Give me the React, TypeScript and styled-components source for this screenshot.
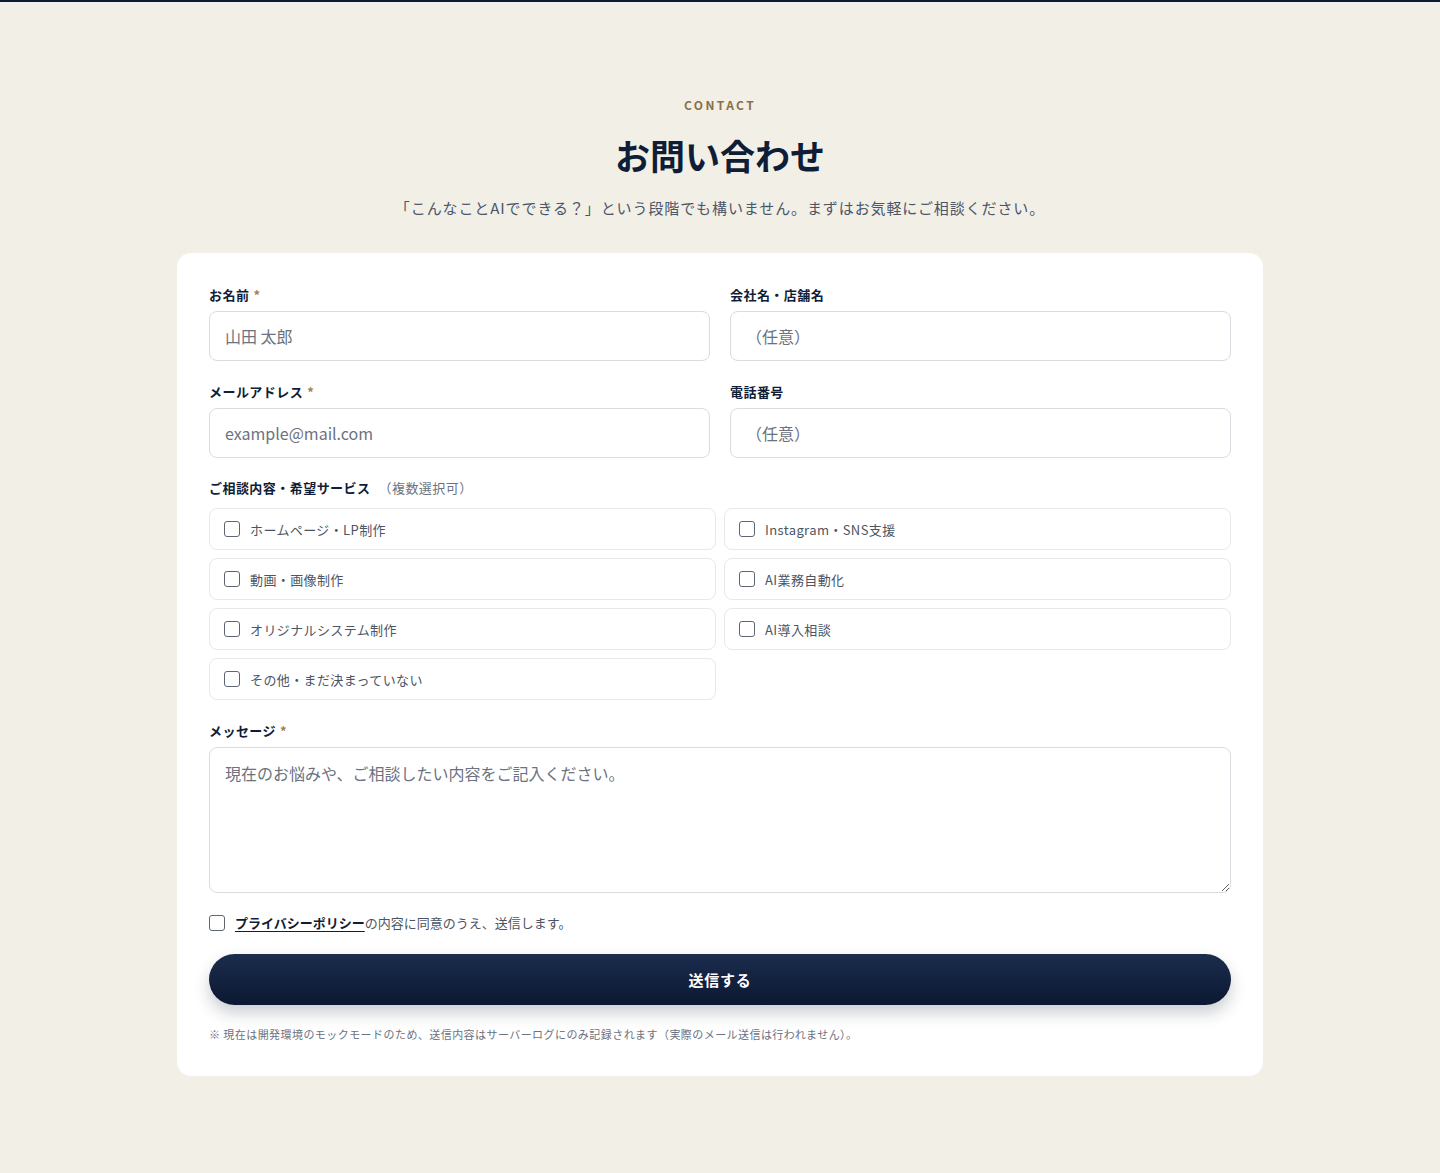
import React, { useState } from 'react';
import styled, { createGlobalStyle } from 'styled-components';

const GlobalStyle = createGlobalStyle`
  * { box-sizing: border-box; }
  body {
    margin: 0;
    background: #f2efe7;
    font-family: "Noto Sans CJK JP", "Noto Sans", sans-serif;
    color: #0f1d36;
    border-top: 2px solid #0c1a35;
  }
`;

const Page = styled.main`
  padding: 94px 0 97px;
  display: flex;
  flex-direction: column;
  align-items: center;
`;

const Eyebrow = styled.div`
  font-size: 12px;
  line-height: 18px;
  font-weight: 700;
  letter-spacing: 0.2em;
  color: #8a7048;
`;

const Title = styled.h1`
  margin: 16px 0 0;
  font-size: 35px;
  line-height: 50px;
  font-weight: 700;
  color: #0f1d36;
`;

const Lead = styled.p`
  margin: 16px 0 0;
  font-size: 15px;
  line-height: 24px;
  letter-spacing: 0.06em;
  color: #4a5568;
`;

const Card = styled.form`
  margin-top: 33px;
  width: 1086px;
  background: #fff;
  border-radius: 14px;
  padding: 32px 32px 34px;
  display: flex;
  flex-direction: column;
`;

const Grid = styled.div<{ $gap: number }>`
  display: grid;
  grid-template-columns: 1fr 1fr;
  column-gap: ${(p) => p.$gap}px;
  row-gap: ${(p) => (p.$gap === 20 ? 21 : 8)}px;
`;

const Field = styled.div<{ $top?: number }>`
  display: flex;
  flex-direction: column;
  gap: 6px;
  margin-top: ${(p) => p.$top ?? 0}px;
`;

const Label = styled.label`
  font-size: 13px;
  line-height: 20px;
  font-weight: 700;
  letter-spacing: 0.035em;
  color: #0f1d36;
`;

const Star = styled.span`
  color: #a0804a;
  margin-left: 4px;
`;

const Note = styled.span`
  font-weight: 400;
  color: #6b7280;
  margin-left: 8px;
`;

const Input = styled.input`
  height: 50px;
  border: 1px solid #d9dce1;
  border-radius: 8px;
  padding: 0 15px;
  font: inherit;
  font-size: 16px;
  color: #0f1d36;
  outline: none;
  &::placeholder { color: #6b7280; }
`;

const TextArea = styled.textarea`
  height: 146px;
  border: 1px solid #d9dce1;
  border-radius: 8px;
  padding: 13px 15px;
  font: inherit;
  font-size: 16px;
  line-height: 24px;
  color: #0f1d36;
  outline: none;
  resize: vertical;
  &::placeholder { color: #6b7280; }
`;

const Check = styled.input.attrs({ type: 'checkbox' })`
  appearance: none;
  margin: 0;
  width: 16px;
  height: 16px;
  flex: none;
  border: 1.5px solid #5f6673;
  border-radius: 3px;
  background: #fff;
  &:checked { background: #0f1d36; border-color: #0f1d36; }
`;

const Option = styled.label`
  height: 42px;
  display: flex;
  align-items: center;
  gap: 10px;
  padding: 0 14px;
  border: 1px solid #e6e8ec;
  border-radius: 8px;
  font-size: 13px;
  letter-spacing: 0.03em;
  color: #4b5563;
  cursor: pointer;
`;

const OptionGrid = styled(Grid)`
  margin-top: 4px;
`;

const Agree = styled.label`
  margin-top: 20px;
  display: flex;
  align-items: center;
  gap: 10px;
  font-size: 13px;
  line-height: 20px;
  color: #4b5563;
`;

const PolicyLink = styled.a`
  font-weight: 700;
  color: #0f1d36;
  text-decoration: underline;
  text-underline-offset: 3px;
`;

const Submit = styled.button`
  margin-top: 21px;
  height: 51px;
  border: none;
  border-radius: 999px;
  background: linear-gradient(180deg, #1b2c4d 0%, #0b1831 100%);
  box-shadow: 0 8px 16px rgba(15, 29, 54, 0.22);
  color: #fff;
  font: inherit;
  font-size: 15px;
  font-weight: 700;
  letter-spacing: 0.05em;
  cursor: pointer;
`;

const Footnote = styled.p`
  margin: 21px 0 0;
  font-size: 11px;
  line-height: 16px;
  letter-spacing: 0.04em;
  color: #6b7280;
`;

const services = [
  'ホームページ・LP制作',
  'Instagram・SNS支援',
  '動画・画像制作',
  'AI業務自動化',
  'オリジナルシステム制作',
  'AI導入相談',
  'その他・まだ決まっていない',
];

export default function App() {
  const [picked, setPicked] = useState<string[]>([]);

  const toggle = (s: string) =>
    setPicked((prev) => (prev.includes(s) ? prev.filter((x) => x !== s) : [...prev, s]));

  return (
    <>
      <GlobalStyle />
      <Page>
        <Eyebrow>CONTACT</Eyebrow>
        <Title>お問い合わせ</Title>
        <Lead>「こんなことAIでできる？」という段階でも構いません。まずはお気軽にご相談ください。</Lead>
        <Card onSubmit={(e) => e.preventDefault()}>
          <Grid $gap={20}>
            <Field>
              <Label>
                お名前<Star>*</Star>
              </Label>
              <Input placeholder="山田 太郎" />
            </Field>
            <Field>
              <Label>会社名・店舗名</Label>
              <Input placeholder="（任意）" />
            </Field>
            <Field>
              <Label>
                メールアドレス<Star>*</Star>
              </Label>
              <Input type="email" placeholder="example@mail.com" />
            </Field>
            <Field>
              <Label>電話番号</Label>
              <Input placeholder="（任意）" />
            </Field>
          </Grid>

          <Field $top={20}>
            <Label>
              ご相談内容・希望サービス<Note>（複数選択可）</Note>
            </Label>
            <OptionGrid $gap={8}>
              {services.map((s) => (
                <Option key={s}>
                  <Check checked={picked.includes(s)} onChange={() => toggle(s)} />
                  {s}
                </Option>
              ))}
            </OptionGrid>
          </Field>

          <Field $top={21}>
            <Label>
              メッセージ<Star>*</Star>
            </Label>
            <TextArea placeholder="現在のお悩みや、ご相談したい内容をご記入ください。" />
          </Field>

          <Agree>
            <Check />
            <span>
              <PolicyLink href="#">プライバシーポリシー</PolicyLink>の内容に同意のうえ、送信します。
            </span>
          </Agree>

          <Submit type="submit">送信する</Submit>

          <Footnote>
            ※ 現在は開発環境のモックモードのため、送信内容はサーバーログにのみ記録されます（実際のメール送信は行われません）。
          </Footnote>
        </Card>
      </Page>
    </>
  );
}
